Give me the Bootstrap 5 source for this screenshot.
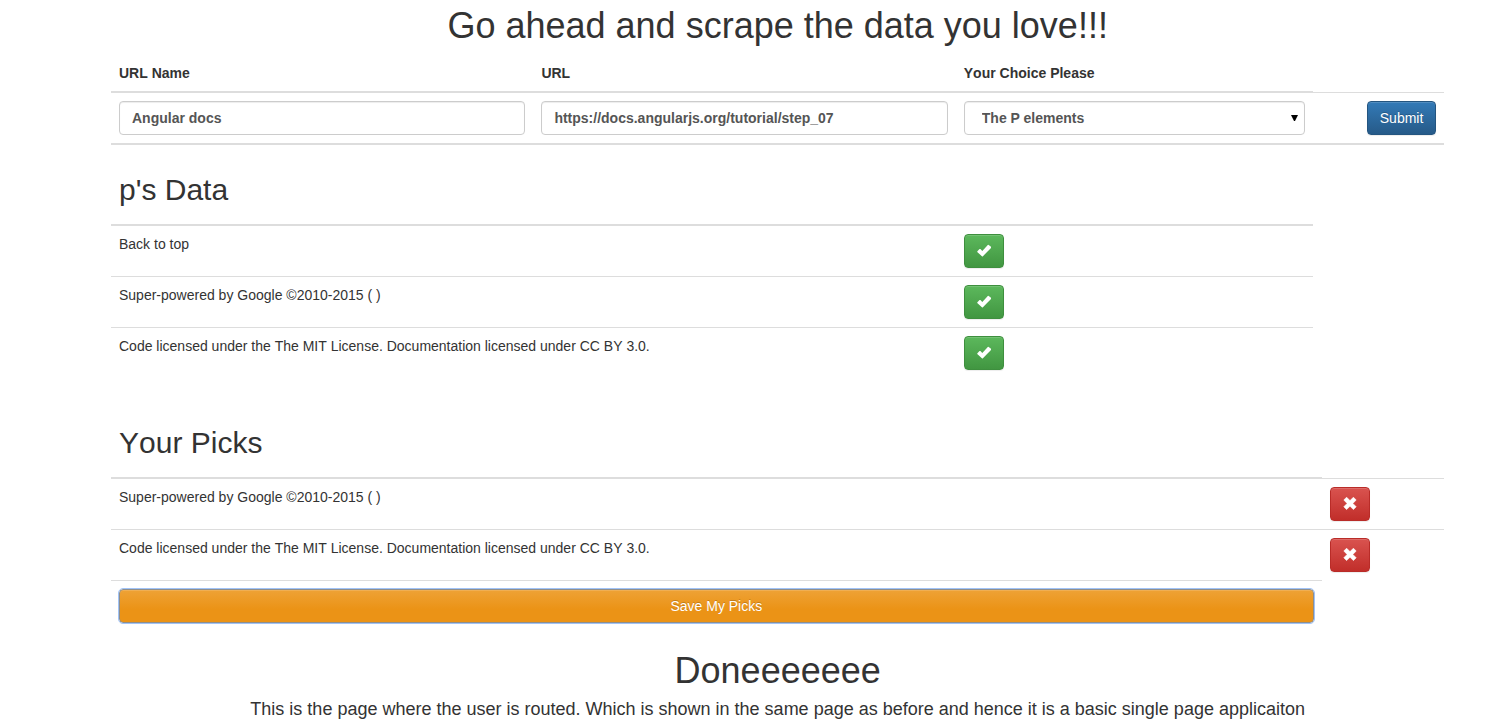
<!DOCTYPE html>
<html lang="en">
<head>
<meta charset="utf-8">
<meta name="viewport" content="width=device-width, initial-scale=1">
<title>Scraper</title>
<link href="https://cdn.jsdelivr.net/npm/bootstrap@5.3.0/dist/css/bootstrap.min.css" rel="stylesheet">
<style>
body { font-family: "Liberation Sans", Arial, sans-serif; font-size: 14px; line-height: 20px; color: #333; font-kerning: none; }
.page-area { padding: 6px 3% 0 111px; }
h1 { font-size: 36px; line-height: 39px; font-weight: 400; margin: 0 0 10px; }
h2 { font-size: 30px; line-height: 33px; font-weight: 400; margin: 20px 0 10px; }
.grid-table { width: 100%; table-layout: fixed; border-collapse: separate; border-spacing: 0; margin-bottom: 20px; }
.grid-table th, .grid-table td { padding: 8px; vertical-align: top; text-align: left; border: 0 solid #ddd; }
.grid-table .line-1 { border-bottom-width: 1px; }
.grid-table .line-2 { border-bottom-width: 2px; }
.col-field { width: 31.68%; }
.col-choice { width: 26.8%; }
.col-pick { width: 90.8%; }
.field { display: block; width: 100%; height: 34px; padding: 6px 12px; font-size: 14px; line-height: 20px; font-weight: 700; color: #555; background-color: #fff; border: 1px solid #ccc; border-radius: 4px; box-shadow: inset 0 1px 1px rgba(0,0,0,.075); }
select.field { appearance: none; padding-left: 17px; background: #fff url("data:image/svg+xml,%3Csvg xmlns='http://www.w3.org/2000/svg' width='7' height='6'%3E%3Cpath d='M0 0h7L4 6H3z'/%3E%3C/svg%3E") no-repeat right 6px top 13px; }
.btn { height: 34px; padding: 6px 12px; font-size: 14px; line-height: 20px; border-radius: 4px; color: #fff; text-shadow: 0 -1px 0 rgba(0,0,0,.2); box-shadow: inset 0 1px 0 rgba(255,255,255,.15), 0 1px 1px rgba(0,0,0,.075); display: block; }
.btn svg { display: block; width: 14px; height: 14px; margin: 3px 0; fill: #fff; overflow: visible; }
.btn-primary { background: linear-gradient(#337ab7, #265a88); border-color: #245580; }
.btn-success { background: linear-gradient(#5cb85c, #419641); border-color: #3e8f3e; }
.btn-danger { background: linear-gradient(#d9534f, #c12e2a); border-color: #b92c28; }
.btn-warning, .btn-warning:hover { color: #fff; background: linear-gradient(#eea236, #eb9316 60%); border-color: #908e8a; outline: 1px solid #a0c3f7; outline-offset: 0; }
.lead-line { font-size: 18px; line-height: 22px; margin: 0; }
</style>
</head>
<body>
<svg class="d-none" aria-hidden="true">
  <symbol id="ok" viewBox="0 0 14 14"><path d="M11.7.9 14.2 3Q14.6 3.4 14.2 3.8L5.9 12.2Q5.4 12.7 4.9 12.2L.5 8.3Q0 7.8.4 7.3L2.5 5.1Q3 4.7 3.4 5.1L5.3 6.9 10.8.9Q11.2.5 11.7.9Z"/></symbol>
  <symbol id="remove" viewBox="0 0 14 14"><path d="M3.6.2 7 3.6 10.4.2 13.2 3 9.9 6.4 13.2 9.8 10.4 12.6 7 9.2 3.6 12.6.8 9.8 4.1 6.4.8 3Z" stroke="#fff" stroke-width=".6" stroke-linejoin="round"/></symbol>
</svg>
<main class="page-area">
  <h1 class="text-center">Go ahead and scrape the data you love!!!</h1>
  <form>
  <table class="grid-table">
    <colgroup><col class="col-field"><col class="col-field"><col class="col-choice"><col></colgroup>
    <thead>
      <tr>
        <th class="line-2"><label for="urlName">URL Name</label></th>
        <th class="line-2"><label for="url">URL</label></th>
        <th class="line-2"><label for="choice">Your Choice Please</label></th>
        <td class="line-1"></td>
      </tr>
    </thead>
    <tbody>
      <tr>
        <td class="line-2"><input class="field" id="urlName" type="text" value="Angular docs"></td>
        <td class="line-2"><input class="field" id="url" type="text" value="https://docs.angularjs.org/tutorial/step_07"></td>
        <td class="line-2"><select class="field" id="choice"><option>The P elements</option></select></td>
        <td class="line-2"><button class="btn btn-primary ms-auto" type="button">Submit</button></td>
      </tr>
    </tbody>
    <tbody>
      <tr><th class="line-2" colspan="3"><h2>p's Data</h2></th></tr>
      <tr><td class="line-1" colspan="2">Back to top</td><td class="line-1"><button class="btn btn-success" type="button" aria-label="Pick"><svg><use href="#ok"/></svg></button></td></tr>
      <tr><td class="line-1" colspan="2">Super-powered by Google ©2010-2015 ( )</td><td class="line-1"><button class="btn btn-success" type="button" aria-label="Pick"><svg><use href="#ok"/></svg></button></td></tr>
      <tr><td colspan="2">Code licensed under the The MIT License. Documentation licensed under CC BY 3.0.</td><td><button class="btn btn-success" type="button" aria-label="Pick"><svg><use href="#ok"/></svg></button></td></tr>
    </tbody>
  </table>
  </form>
  <table class="grid-table">
    <colgroup><col class="col-pick"><col></colgroup>
    <thead>
      <tr><th class="line-2"><h2>Your Picks</h2></th><td class="line-1"></td></tr>
    </thead>
    <tbody>
      <tr><td class="line-1">Super-powered by Google ©2010-2015 ( )</td><td class="line-1"><button class="btn btn-danger" type="button" aria-label="Remove"><svg><use href="#remove"/></svg></button></td></tr>
      <tr><td class="line-1">Code licensed under the The MIT License. Documentation licensed under CC BY 3.0.</td><td class="line-1 border-white"><button class="btn btn-danger" type="button" aria-label="Remove"><svg><use href="#remove"/></svg></button></td></tr>
      <tr><td><button class="btn btn-warning w-100" type="button">Save My Picks</button></td></tr>
    </tbody>
  </table>
  <section class="text-center">
    <h1 class="mb-2">Doneeeeeee</h1>
    <p class="lead-line">This is the page where the user is routed. Which is shown in the same page as before and hence it is a basic single page applicaiton</p>
  </section>
</main>
<script src="https://cdn.jsdelivr.net/npm/bootstrap@5.3.0/dist/js/bootstrap.bundle.min.js"></script>
</body>
</html>
